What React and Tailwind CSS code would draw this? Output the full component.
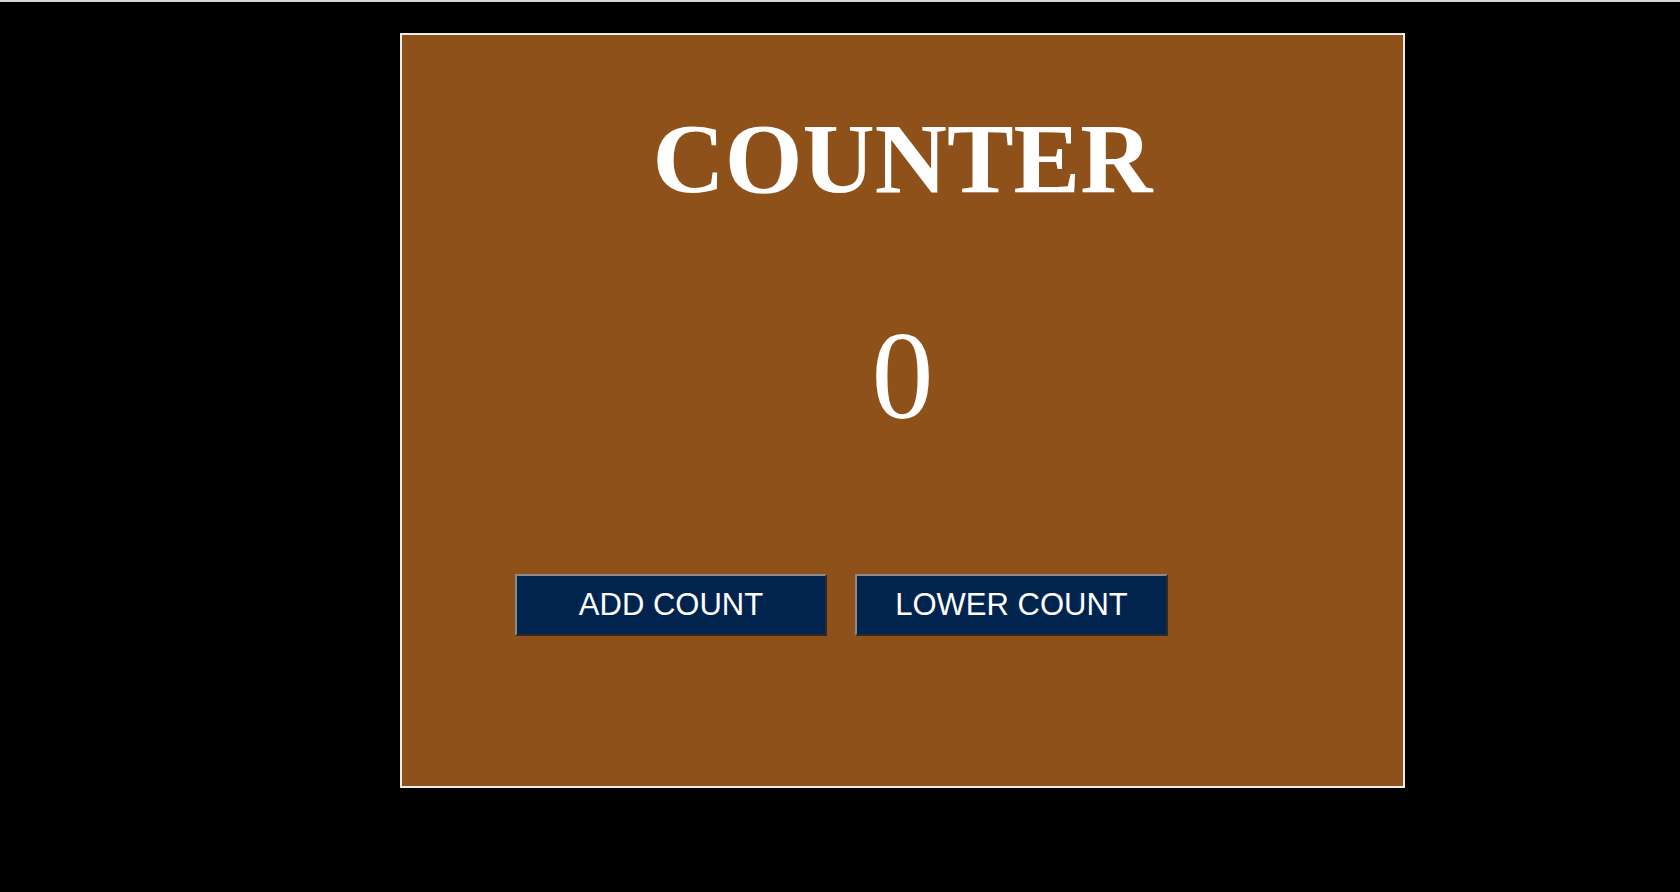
import React, { useState } from "react";

const Counter = () => {
  const [count, setCount] = useState(0);

  return (
    <div className="min-h-[892px] bg-black">
      <div className="h-[2px] bg-[#d6d6d6]" />
      <div className="pt-[31px] pl-[400px]">
        <div className="flex h-[755px] w-[1005px] flex-col border-2 border-[#f2ece8] bg-[#8d5119]">
          <h1 className="mt-[74px] text-center font-['Liberation_Serif',serif] text-[100px] font-bold leading-none text-white">
            COUNTER
          </h1>
          <p className="mt-[106px] text-center font-['Liberation_Serif',serif] text-[124px] leading-none text-white">
            {count}
          </p>
          <div className="mt-[135px] flex gap-[28px] pl-[113px]">
            <button
              onClick={() => setCount(count + 1)}
              className="h-[62px] w-[312px] border-2 border-t-[#8a8a8a] border-l-[#8a8a8a] border-r-[#2e2a28] border-b-[#2e2a28] bg-[#01244f] font-['Liberation_Sans',Arial,sans-serif] text-[31px] text-white"
            >
              ADD COUNT
            </button>
            <button
              onClick={() => setCount(count - 1)}
              className="h-[62px] w-[313px] border-2 border-t-[#8a8a8a] border-l-[#8a8a8a] border-r-[#2e2a28] border-b-[#2e2a28] bg-[#01244f] font-['Liberation_Sans',Arial,sans-serif] text-[31px] text-white"
            >
              LOWER COUNT
            </button>
          </div>
        </div>
      </div>
    </div>
  );
};

export default Counter;
